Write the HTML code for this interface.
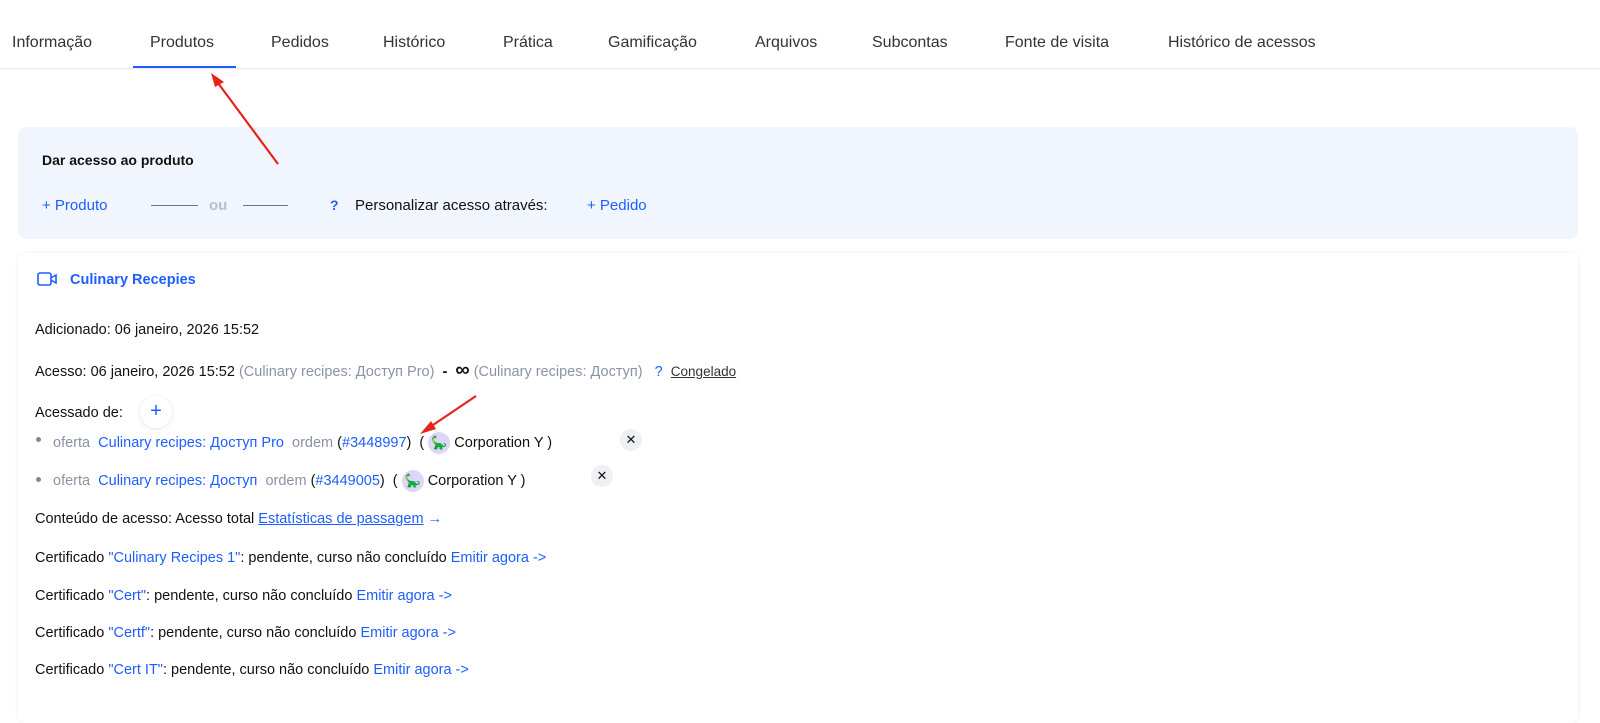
<!DOCTYPE html>
<html><head><meta charset="utf-8"><style>
body{margin:0;width:1600px;height:708px;background:#fff;font-family:"Liberation Sans",sans-serif;font-size:14.5px;color:#111;position:relative;overflow:hidden}
.a{position:absolute;white-space:nowrap}
.b{color:#1e5eff}.g{color:#8a93a6}
.tab{position:absolute;top:34px;font-size:16px;color:#333}
.x{position:absolute;width:22px;height:22px;border-radius:50%;background:#eef0f3;font-size:13px;text-align:center;line-height:22px}
.av{display:inline-block;width:22px;height:22px;border-radius:50%;background:#ddd6f7;vertical-align:middle;text-align:center;line-height:22px;font-size:13px;color:#2c8a3c}
.dot{position:absolute;width:5px;height:5px;border-radius:50%;background:#888}
</style></head><body>
<div class="a" style="left:0;top:0;width:1600px;height:68px;border-bottom:1px solid #e8eaee;box-shadow:0 1px 3px rgba(0,0,0,.04)"></div>
<div class="tab" style="left:12px">Informação</div>
<div class="tab" style="left:150px">Produtos</div>
<div class="tab" style="left:271px">Pedidos</div>
<div class="tab" style="left:383px">Histórico</div>
<div class="tab" style="left:503px">Prática</div>
<div class="tab" style="left:608px">Gamificação</div>
<div class="tab" style="left:755px">Arquivos</div>
<div class="tab" style="left:872px">Subcontas</div>
<div class="tab" style="left:1005px">Fonte de visita</div>
<div class="tab" style="left:1168px">Histórico de acessos</div>
<div class="a" style="left:133px;top:66px;width:103px;height:2px;background:#1e5eff"></div>

<div class="a" style="left:18px;top:127px;width:1560px;height:112px;background:#f1f6fe;border-radius:8px"></div>
<div class="a" style="left:42px;top:152px;font-size:14px;font-weight:bold;color:#111">Dar acesso ao produto</div>
<div class="a b" style="left:42px;top:197px;font-size:15px">+ Produto</div>
<div class="a" style="left:151px;top:205px;width:47px;height:1px;background:#6b7280"></div>
<div class="a" style="left:209px;top:197px;font-size:15px;color:#b4bfd0;font-weight:bold">ou</div>
<div class="a" style="left:243px;top:205px;width:45px;height:1px;background:#6b7280"></div>
<div class="a b" style="left:330px;top:197px;font-size:14px;font-weight:bold">?</div>
<div class="a" style="left:355px;top:197px;font-size:15px">Personalizar acesso através:</div>
<div class="a b" style="left:587px;top:197px;font-size:15px">+ Pedido</div>

<div class="a" style="left:18px;top:253px;width:1560px;height:470px;background:#fff;border-radius:8px;box-shadow:0 0 4px rgba(0,0,0,.08)"></div>
<svg class="a" style="left:37px;top:271px" width="22" height="16" viewBox="0 0 22 16"><rect x="1" y="2" width="13" height="12" rx="2" fill="none" stroke="#1e5eff" stroke-width="1.6"/><path d="M14 7l5-3v8l-5-3" fill="none" stroke="#1e5eff" stroke-width="1.6"/></svg>
<div class="a b" style="left:70px;top:272px;font-size:14.5px;font-weight:bold">Culinary Recepies</div>
<div class="a" style="left:35px;top:322px">Adicionado: 06 janeiro, 2026 15:52</div>
<div class="a" style="left:35px;top:364px">Acesso: 06 janeiro, 2026 15:52 <span class="g">(Culinary recipes: Доступ Pro)</span> &nbsp;<b>-</b>&nbsp; <b style="font-size:20px;line-height:10px">∞</b> <span class="g">(Culinary recipes: Доступ)</span> &nbsp;&nbsp;<span class="b">?</span>&nbsp; <span style="text-decoration:underline;color:#333;font-size:13.5px">Congelado</span></div>
<div class="a" style="left:35px;top:405px">Acessado de:</div>
<div class="a" style="left:140px;top:396px;width:32px;height:32px;border-radius:50%;background:#fff;box-shadow:0 1px 4px rgba(0,0,0,.12);color:#1e5eff;font-size:20px;text-align:center;line-height:30px">+</div>
<div class="dot" style="left:36px;top:437px"></div>
<div class="a" style="left:53px;top:432px"><span class="g">oferta</span>&nbsp; <span class="b">Culinary recipes: Доступ Pro</span>&nbsp; <span class="g">ordem</span> (<span class="b">#3448997</span>) &nbsp;( <span class="av">🦕</span> Corporation Y )</div>
<div class="x" style="left:620px;top:429px">✕</div>
<div class="dot" style="left:36px;top:477px"></div>
<div class="a" style="left:53px;top:470px"><span class="g">oferta</span>&nbsp; <span class="b">Culinary recipes: Доступ</span>&nbsp; <span class="g">ordem</span> (<span class="b">#3449005</span>) &nbsp;( <span class="av">🦕</span> Corporation Y )</div>
<div class="x" style="left:591px;top:465px">✕</div>
<div class="a" style="left:35px;top:511px">Conteúdo de acesso: Acesso total <span class="b" style="text-decoration:underline">Estatísticas de passagem</span> <span class="b">→</span></div>
<div class="a" style="left:35px;top:550px">Certificado <span class="b">"Culinary Recipes 1"</span>: pendente, curso não concluído <span class="b">Emitir agora -&gt;</span></div>
<div class="a" style="left:35px;top:588px">Certificado <span class="b">"Cert"</span>: pendente, curso não concluído <span class="b">Emitir agora -&gt;</span></div>
<div class="a" style="left:35px;top:625px">Certificado <span class="b">"Certf"</span>: pendente, curso não concluído <span class="b">Emitir agora -&gt;</span></div>
<div class="a" style="left:35px;top:662px">Certificado <span class="b">"Cert IT"</span>: pendente, curso não concluído <span class="b">Emitir agora -&gt;</span></div>

<svg class="a" style="left:0;top:0" width="1600" height="708"><g stroke="#e8231a" stroke-width="2.2" fill="#e8231a"><line x1="278" y1="164" x2="218" y2="83"/><polygon points="211,73 224,82 215,87" stroke="none"/><line x1="476" y1="396" x2="430" y2="427"/><polygon points="420,434 431,421 436,429" stroke="none"/></g></svg>
</body></html>
